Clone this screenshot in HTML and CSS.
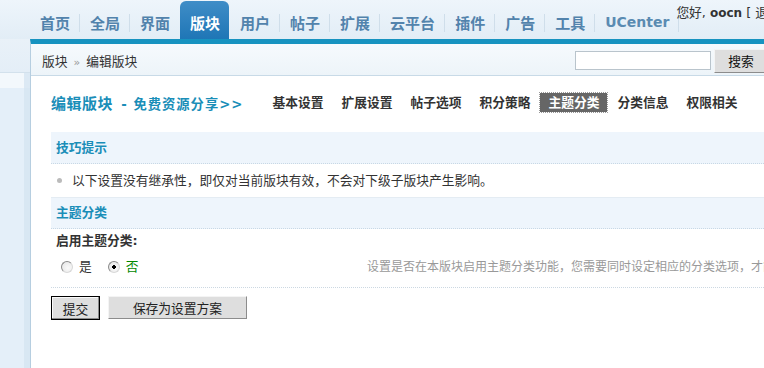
FILE: index.html
```html
<!DOCTYPE html>
<html lang="zh-CN">
<head>
<meta charset="utf-8">
<title>编辑版块</title>
<link rel="stylesheet" href="styles.css">
</head>
<body>
<div class="page">
  <header class="top">
    <div class="top-side"></div>
    <nav class="nav">
      <a class="item">首页</a><span class="sep"></span>
      <a class="item">全局</a><span class="sep"></span>
      <a class="item">界面</a><span class="sep hide"></span>
      <a class="item active">版块</a><span class="sep hide"></span>
      <a class="item">用户</a><span class="sep"></span>
      <a class="item">帖子</a><span class="sep"></span>
      <a class="item">扩展</a><span class="sep"></span>
      <a class="item">云平台</a><span class="sep"></span>
      <a class="item">插件</a><span class="sep"></span>
      <a class="item">广告</a><span class="sep"></span>
      <a class="item">工具</a><span class="sep"></span>
      <a class="item uc">UCenter</a><span class="sep"></span>
    </nav>
    <div class="uinfo">您好, <b>oocn</b> [ 退出 ]</div>
  </header>
  <div class="body">
    <aside class="side">
      <div class="side-top"></div>
      <div class="side-band"></div>
      <div class="side-rest"></div>
    </aside>
    <main class="main">
      <div class="crumb">
        <span class="crumb-text">版块 <em>»</em> 编辑版块</span>
        <form class="search">
          <input class="search-input" type="text">
          <button class="search-btn" type="button">搜索</button>
        </form>
      </div>
      <div class="content">
        <div class="titlebar">
          <h3 class="title"><span class="t1">编辑版块</span> <span class="t2">- 免费资源分享&gt;&gt;</span></h3>
          <ul class="tabs">
            <li>基本设置</li>
            <li>扩展设置</li>
            <li>帖子选项</li>
            <li>积分策略</li>
            <li class="on">主题分类</li>
            <li>分类信息</li>
            <li>权限相关</li>
          </ul>
        </div>

        <div class="th th-first">技巧提示</div>
        <ul class="tips"><li>以下设置没有继承性，即仅对当前版块有效，不会对下级子版块产生影响。</li></ul>

        <div class="th">主题分类</div>
        <div class="label">启用主题分类:</div>
        <div class="row">
          <div class="rowform">
            <label class="radio"><input type="radio" name="en"> 是</label>
            <label class="radio checked"><input type="radio" name="en" checked> 否</label>
          </div>
          <div class="tips2">设置是否在本版块启用主题分类功能，您需要同时设定相应的分类选项，才能启用本功能</div>
        </div>
        <div class="actions">
          <button class="btn btn-submit" type="button">提交</button>
          <button class="btn btn-save" type="button">保存为设置方案</button>
        </div>
      </div>
    </main>
  </div>
</div>
</body>
</html>
```

FILE: styles.css
```css
html, body {
  margin: 0;
  padding: 0;
  background: #fff;
  overflow: hidden;
}
body {
  font-family: "DejaVu Sans", "Noto Sans CJK SC", sans-serif;
  font-size: 12.75px;
  color: #333;
}
.page {
  width: 800px;
  height: 368px;
  display: flex;
  flex-direction: column;
}

/* header */
.top {
  height: 39px;
  flex: none;
  display: flex;
  background: linear-gradient(#eef5fb, #e2edf6);
}
.top-side { width: 30px; flex: none; }
.nav {
  display: flex;
  align-items: flex-end;
  height: 39px;
}
.item {
  height: 38px;
  box-sizing: border-box;
  padding: 4px 9px 0 10px;
  display: flex;
  align-items: center;
  font-size: 15px;
  font-weight: bold;
  color: #5283ac;
  white-space: nowrap;
}
.item.uc { font-size: 14px; color: #5a8bb2; }
.item.active {
  background: linear-gradient(#3f8dc7, #1f76b6);
  border-radius: 6px 6px 0 0;
  color: #fff;
}
.sep {
  width: 1px;
  height: 18px;
  background: #cfdeea;
  align-self: center;
  margin-top: 6px;
}
.sep.hide { background: transparent; }
.uinfo {
  margin-left: -3px;
  padding-top: 5px;
  line-height: 16px;
  white-space: nowrap;
  color: #333;
  font-size: 12.75px;
}
.uinfo b { font-family: "DejaVu Sans", sans-serif; font-size: 12px; }

/* body */
.body {
  flex: 1;
  display: flex;
  min-height: 0;
}
.side {
  width: 30px;
  flex: none;
  display: flex;
  flex-direction: column;
}
.side-top {
  height: 33px;
  background: linear-gradient(#e9f1f8, #e4eef7);
  border-bottom: 1px solid #d3e1ec;
}
.side-band {
  height: 15px;
  background: linear-gradient(to right, #f3f8fc 24px, #dce9f4 24px);
}
.side-rest {
  flex: 1;
  background: linear-gradient(to right, #e4eff9 24px, #d8e7f3 24px);
}
.main {
  flex: 1;
  min-width: 0;
  overflow: hidden;
  border-top: 5px solid #1793c0;
  border-left: 1px solid #b6cee0;
  display: flex;
  flex-direction: column;
}
.crumb {
  height: 32px;
  flex: none;
  box-sizing: border-box;
  border-bottom: 1px solid #c8dae7;
  background: linear-gradient(#f6fafd, #edf4f9);
  display: flex;
  align-items: center;
  padding: 2px 32px 0 11px;
}
.crumb-text em { font-style: normal; color: #999; font-size: 11px; margin: 0 2px; }
.search {
  margin: 0 0 0 auto;
  display: flex;
  align-items: center;
  gap: 3px;
}
.search-input {
  width: 136px;
  height: 19px;
  box-sizing: border-box;
  border: 1px solid #b9c4cc;
  background: #fff;
  margin: 0;
}
.search-btn {
  width: 54px;
  height: 24px;
  margin: 0;
  padding: 0;
  font: inherit;
  color: #111;
  background: #dedede;
  border: 1px solid;
  border-color: #f4f4f4 #8c8c8c #8c8c8c #f4f4f4;
}

/* content */
.content {
  padding: 16px 0 0 20px;
}
.titlebar {
  display: flex;
  align-items: center;
  height: 21px;
}
.title {
  margin: 0;
  font-size: 15px;
  font-weight: bold;
  color: #1a8eb8;
  white-space: nowrap;
}
.t1 { letter-spacing: 0.5px; }
.t2 { font-size: 13.3px; letter-spacing: 1px; margin-left: 3px; }
.tabs {
  list-style: none;
  margin: 0 0 0 21px;
  padding: 0;
  display: flex;
  gap: 2px;
}
.tabs li {
  padding: 0 8px;
  height: 19px;
  line-height: 19px;
  font-weight: bold;
  color: #333;
  white-space: nowrap;
}
.tabs li.on {
  background: #666;
  color: #fff;
  outline: 1px dotted #999;
}

.th {
  height: 30px;
  line-height: 30px;
  background: #eef5fc;
  border-bottom: 1px dotted #c8d8e5;
  padding-left: 5px;
  font-weight: bold;
  color: #1a8eb8;
}
.th-first { margin-top: 19px; height: 31px; line-height: 31px; }
.tips {
  list-style: none;
  margin: 0;
  padding: 0;
  height: 33px;
  border-bottom: 1px solid #e4ecf3;
}
.tips li {
  line-height: 33px;
  padding-left: 21px;
  position: relative;
}
.tips li::before {
  content: "";
  position: absolute;
  left: 6px;
  top: 14px;
  width: 5px;
  height: 5px;
  border-radius: 50%;
  background: #bbb;
}
.label {
  height: 24px;
  line-height: 24px;
  padding-left: 5px;
  font-weight: bold;
  color: #333;
}
.row {
  display: grid;
  grid-template-columns: 316px auto;
  height: 28px;
  line-height: 28px;
  padding-bottom: 6px;
  border-bottom: 1px dotted #ccd8e2;
  white-space: nowrap;
}
.rowform {
  padding-left: 10px;
  display: flex;
  align-items: center;
}
.radio {
  display: inline-flex;
  align-items: center;
  margin-right: 16px;
  color: #333;
}
.radio.checked { color: #080; }
.radio input {
  appearance: none;
  -webkit-appearance: none;
  width: 12px;
  height: 12px;
  margin: 0 6px 0 0;
  border-radius: 50%;
  border: 1px solid;
  border-color: #8a8a8a #d8d8d8 #d8d8d8 #8a8a8a;
  background: radial-gradient(circle at 60% 60%, #fafafa, #e4e4e4);
  box-sizing: border-box;
}
.radio input:checked {
  background: radial-gradient(circle, #000 1.6px, transparent 2px), radial-gradient(circle at 60% 60%, #fafafa, #e4e4e4);
}
.tips2 { color: #999; font-size: 12px; }

.actions {
  display: flex;
  align-items: flex-start;
  margin-top: 8px;
  gap: 8px;
}
.btn {
  margin: 0;
  padding: 0;
  font: inherit;
  color: #222;
  background: #dedede;
}
.btn-submit {
  width: 49px;
  height: 24px;
  border: 1px solid #000;
  box-shadow: inset -1px -1px #8c8c8c, inset 1px 1px #fafafa;
}
.btn-save {
  width: 139px;
  height: 23px;
  border: 1px solid;
  border-color: #f4f4f4 #8c8c8c #8c8c8c #f4f4f4;
}
```
